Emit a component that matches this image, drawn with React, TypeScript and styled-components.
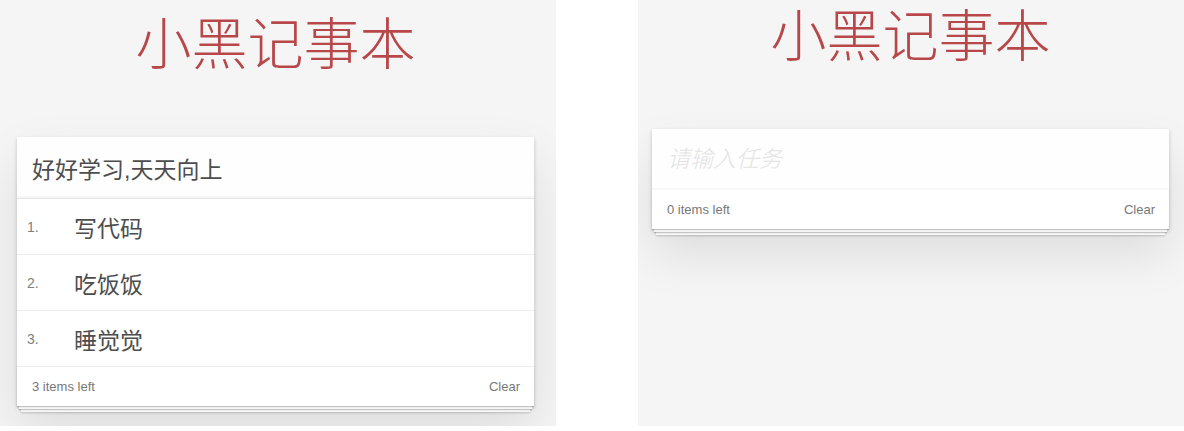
import styled, { createGlobalStyle } from "styled-components";

const GlobalStyle = createGlobalStyle`
	html, body {
		margin: 0;
		padding: 0;
		background: #fff;
	}
	body {
		font-family: "Liberation Sans", Arial, "Noto Sans CJK SC", sans-serif;
		color: #4d4d4d;
	}
`;

const Page = styled.div`
	display: flex;
	width: 1184px;
	height: 431px;
	background: #fff;
	overflow: hidden;
`;

const Panel = styled.div<{ $width: number; $left: number }>`
	width: ${(p) => p.$width}px;
	height: 426px;
	flex-shrink: 0;
	background: #f5f5f5;
	box-sizing: border-box;
	padding-left: ${(p) => p.$left}px;
	overflow: hidden;
`;

// the right shot is scrolled a few pixels further than the left one
const Content = styled.div<{ $shift: number }>`
	margin-top: ${(p) => p.$shift}px;
`;

const Gap = styled.div`
	width: 82px;
	flex-shrink: 0;
`;

const Title = styled.h1`
	width: 517px;
	margin: 0;
	height: 137px;
	padding-top: 10px;
	box-sizing: border-box;
	font-family: "Noto Sans CJK SC Light", "Noto Sans CJK SC DemiLight", "Noto Sans CJK SC", sans-serif;
	font-size: 56px;
	font-weight: 200;
	line-height: 60px;
	text-align: center;
	color: #b8474a;
`;

const Card = styled.section`
	width: 517px;
	background: #fff;
	position: relative;
	box-shadow: 0 2px 4px 0 rgba(0, 0, 0, 0.2), 0 25px 50px 0 rgba(0, 0, 0, 0.1);
`;

const Input = styled.input`
	display: block;
	width: 100%;
	height: 61px;
	box-sizing: border-box;
	margin: 0;
	padding: 0 15px;
	border: none;
	outline: none;
	background: rgba(0, 0, 0, 0.003);
	box-shadow: inset 0 -2px 1px rgba(0, 0, 0, 0.03);
	font-family: "Liberation Sans", Arial, "Noto Sans CJK SC", sans-serif;
	font-size: 23px;
	color: #4d4d4d;
	&::placeholder {
		font-style: italic;
		font-weight: 300;
		color: #e3e3e3;
	}
`;

const List = styled.ul`
	margin: 0;
	padding: 0;
	list-style: none;
	border-top: 1px solid #e6e6e6;
`;

const Item = styled.li`
	display: flex;
	align-items: center;
	height: 56px;
	border-bottom: 1px solid #ededed;
	box-sizing: border-box;
`;

const Index = styled.span`
	width: 57px;
	padding-left: 10px;
	box-sizing: border-box;
	flex-shrink: 0;
	font-size: 14px;
	color: #808080;
`;

const Label = styled.label`
	font-family: "Liberation Sans", Arial, "Noto Sans CJK SC", sans-serif;
	font-size: 23px;
	color: #4d4d4d;
`;

const Footer = styled.footer`
	position: relative;
	display: flex;
	justify-content: space-between;
	align-items: center;
	height: 39px;
	box-sizing: border-box;
	padding: 0 14px 0 15px;
	font-size: 13px;
	color: #777;
	&::before {
		content: "";
		position: absolute;
		left: 0;
		right: 0;
		bottom: 0;
		height: 39px;
		pointer-events: none;
		box-shadow: 0 1px 1px rgba(0, 0, 0, 0.2), 0 5px 0 -2px #f6f6f6,
			0 6px 1px -2px rgba(0, 0, 0, 0.2), 0 10px 0 -4px #f6f6f6,
			0 11px 2px -4px rgba(0, 0, 0, 0.2);
	}
`;

const FooterText = styled.span`
	position: relative;
`;

type Todo = string;

const TodoApp = ({ todos, value }: { todos: Todo[]; value: string }) => (
	<>
		<Title>小黑记事本</Title>
		<Card>
			<Input placeholder="请输入任务" defaultValue={value} />
			{todos.length > 0 && (
				<List>
					{todos.map((t, i) => (
						<Item key={t}>
							<Index>{i + 1}.</Index>
							<Label>{t}</Label>
						</Item>
					))}
				</List>
			)}
			<Footer>
				<FooterText>{todos.length} items left</FooterText>
				<FooterText>Clear</FooterText>
			</Footer>
		</Card>
	</>
);

const App = () => {
	return (
		<Page>
			<GlobalStyle />
			<Panel $width={556} $left={17}>
				<Content $shift={0}>
					<TodoApp todos={["写代码", "吃饭饭", "睡觉觉"]} value="好好学习,天天向上" />
				</Content>
			</Panel>
			<Gap />
			<Panel $width={546} $left={14}>
				<Content $shift={-8}>
					<TodoApp todos={[]} value="" />
				</Content>
			</Panel>
		</Page>
	);
};

export default App;
